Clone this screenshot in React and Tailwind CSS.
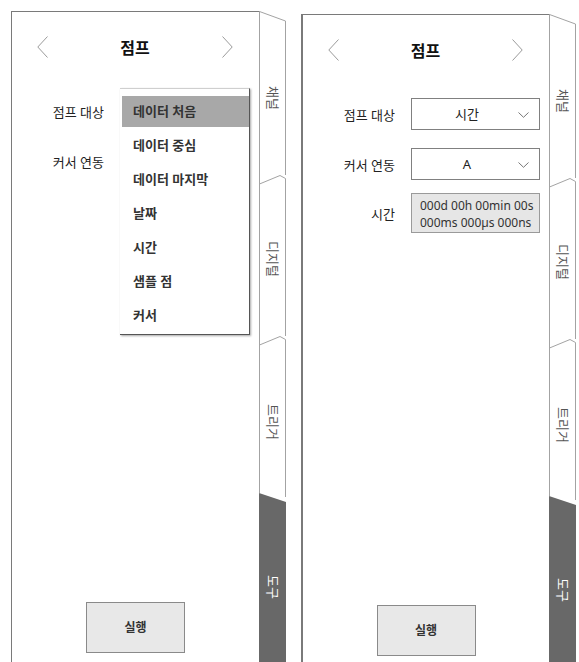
import React from "react";

const FONT = "font-['Noto_Sans','Noto_Sans_CJK_KR',sans-serif]";

function Chevron({ dir }) {
  return (
    <svg width="11" height="22" viewBox="0 0 11 22" className="block">
      <path
        d={dir === "l" ? "M10.5 0.5 L0.8 11 L10.5 21.5" : "M0.5 0.5 L10.2 11 L0.5 21.5"}
        fill="none"
        stroke="#9a9a9a"
        strokeWidth="1"
      />
    </svg>
  );
}

function Caret() {
  return (
    <svg width="11" height="6" viewBox="0 0 11 6" className="block">
      <path d="M0.5 0.5 L5.5 5.3 L10.5 0.5" fill="none" stroke="#777" strokeWidth="1" />
    </svg>
  );
}

function Tab({ label, kind, hClass, h, textClass }) {
  const line = "#a3a3a3";
  return (
    <div className={`relative w-[27px] ${hClass} flex items-center justify-center`}>
      {kind === "dark" ? (
        <svg className="absolute inset-0 overflow-hidden" width="27" height="100%">
          <polygon points="0,0 27,9 27,2000 0,2000" fill="#686868" />
        </svg>
      ) : (
        <svg className="absolute left-0 top-0 overflow-visible" width="27" height={h}>
          <path d={`M0.5 0 V${h}`} fill="none" stroke={line} strokeWidth="1" />
          {kind === "first" ? (
            <path d={`M0.5 0.5 L26.5 10 L26.5 ${h - 9}`} fill="none" stroke={line} strokeWidth="1" />
          ) : (
            <path
              d={`M0.5 0 L21 -8.5 L26.5 -5.5 L26.5 ${kind === "last" ? h + 4 : h - 9}`}
              fill="none"
              stroke={line}
              strokeWidth="1"
            />
          )}
        </svg>
      )}
      <span
        className={`relative text-[13px] leading-none [writing-mode:vertical-rl] [text-orientation:sideways] ${
          kind === "dark" ? "text-white" : "text-[#555]"
        } ${textClass}`}
      >
        {label}
      </span>
    </div>
  );
}

function Select({ value }) {
  return (
    <div className="relative w-[129px] h-[32px] border border-[#808080] bg-white flex items-center justify-center pr-[17px]">
      <span className="text-[13px] text-[#222] leading-none">{value}</span>
      <span className="absolute right-[10px] top-[13px]">
        <Caret />
      </span>
    </div>
  );
}

function Row({ label, children, className }) {
  return (
    <div className={`flex items-center ${className}`}>
      <div className="w-[92px] text-right text-[13px] text-[#222] leading-none translate-y-[1px]">{label}</div>
      <div className="ml-[16px]">{children}</div>
    </div>
  );
}

const items = ["데이터 처음", "데이터 중심", "데이터 마지막", "날짜", "시간", "샘플 점", "커서"];

function Panel({ variant }) {
  const left = variant === "left";
  return (
    <div className={`flex w-[275px] h-[659px] ${left ? "" : "mt-[3px]"}`}>
      <div
        className={`relative w-[248px] h-full flex flex-col border-t border-[#7a7a7a] ${
          left ? "border-l" : "border-l-2"
        }`}
      >
        <div className="mt-[24px] h-[22px] flex items-center justify-between pl-[25px] pr-[26px]">
          <Chevron dir="l" />
          <div className="text-[16px] font-bold text-[#111] leading-none translate-y-[1px]">점프</div>
          <Chevron dir="r" />
        </div>

        <Row label="점프 대상" className="mt-[37px]">
          {left ? <div className="w-[129px] h-[32px]" /> : <Select value="시간" />}
        </Row>
        <Row label="커서 연동" className="mt-[18px]">
          {left ? <div className="w-[129px] h-[32px]" /> : <Select value="A" />}
        </Row>
        {!left && (
          <Row label="시간" className="mt-[13px]">
            <div className="w-[129px] h-[40px] border border-[#9a9a9a] bg-[#e6e6e6] pl-[8px] pt-[1px] flex flex-col justify-center text-[12px] leading-[17px] text-[#333]">
              <div>000d 00h 00min 00s</div>
              <div>000ms 000µs 000ns</div>
            </div>
          </Row>
        )}

        {left && (
          <div className="absolute left-[108px] top-[76px] w-[130px] h-[247px] bg-white border-t border-[#cfcfcf] border-r border-b border-r-[#555] border-b-[#555] shadow-[1px_1px_2px_rgba(0,0,0,0.35)] pt-[5px] pl-[2px]">
            {items.map((it, i) => (
              <div key={it} className="h-[34px] flex items-center">
                <div
                  className={`w-[127px] h-[31px] flex items-center pl-[11px] text-[13px] font-bold leading-none text-[#333] ${
                    i === 0 ? "bg-[#a8a8a8]" : ""
                  }`}
                >
                  {it}
                </div>
              </div>
            ))}
          </div>
        )}

        <div className="mt-auto mb-[17px] self-center w-[99px] h-[51px] bg-[#e8e8e8] border border-[#8a8a8a] flex items-center justify-center text-[12px] font-bold text-[#333]">
          실행
        </div>
      </div>

      <div className="w-[27px] h-full flex flex-col">
        <Tab label="채널" kind="first" hClass="h-[173px]" h={173} textClass="" />
        <Tab label="디지털" kind="mid" hClass="h-[161px]" h={161} textClass="-translate-y-[6px]" />
        <Tab label="트리거" kind="last" hClass="h-[148px]" h={148} textClass="translate-y-[3px]" />
        <div className="flex-1 flex">
          <Tab label="도구" kind="dark" hClass="h-full" h={200} textClass="translate-y-[5px]" />
        </div>
      </div>
    </div>
  );
}

export default function App() {
  return (
    <div className={`w-[579px] h-[662px] overflow-hidden bg-white ${FONT}`}>
      <div className="flex pt-[11px] pl-[11px] gap-[15px]">
        <Panel variant="left" />
        <Panel variant="right" />
      </div>
    </div>
  );
}
